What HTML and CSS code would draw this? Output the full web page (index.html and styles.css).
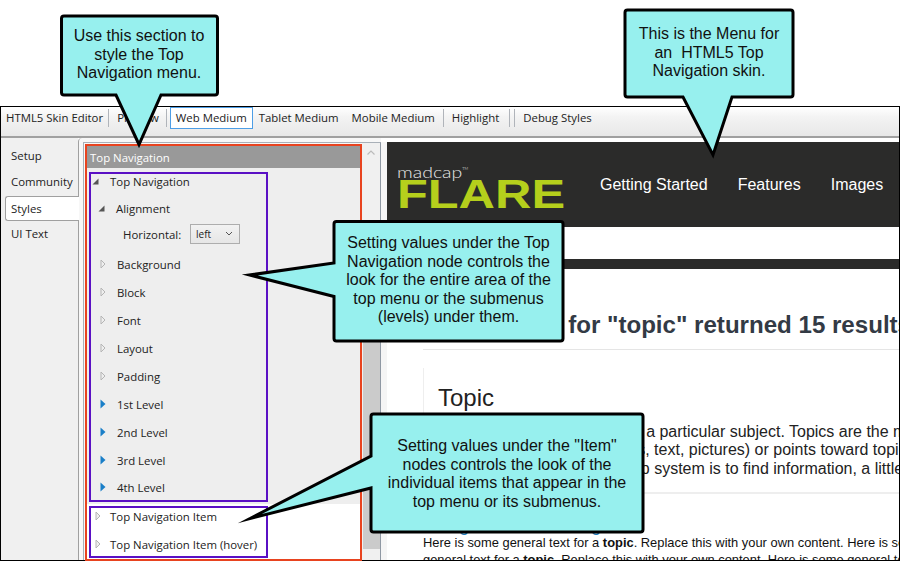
FILE: index.html
```html
<!DOCTYPE html>
<html lang="en">
<head>
<meta charset="UTF-8">
<meta name="viewport" content="width=device-width, initial-scale=1.0">
<title>HTML5 Skin Editor - Top Navigation</title>
<link rel="stylesheet" href="styles.css">
</head>
<body>

<svg class="icon-defs" width="0" height="0">
  <symbol id="tri-open" viewBox="0 0 7 7"><path d="M6.5 0.5V6.5H0.5Z" fill="#555"/></symbol>
  <symbol id="tri-closed" viewBox="0 0 6 10"><path d="M1 1L5 5L1 9Z" fill="#eee" stroke="#b5b5b5"/></symbol>
  <symbol id="tri-blue" viewBox="0 0 6 10"><path d="M0.5 0.5L5.5 5L0.5 9.5Z" fill="#1a7fc8"/></symbol>
</svg>

<div class="app">
  <div class="window">
    <div class="toolbar">
      <span class="tool first">HTML5 Skin Editor</span>
      <span class="tool-sep"></span>
      <span class="tool preview-tool">Preview</span>
      <span class="tool-sep"></span>
      <span class="tool active">Web Medium</span>
      <span class="tool tablet">Tablet Medium</span>
      <span class="tool mobile">Mobile Medium</span>
      <span class="tool-sep"></span>
      <span class="tool pad highlight">Highlight</span>
      <span class="tool-sep"></span>
      <span class="tool-sep second"></span>
      <span class="tool pad">Debug Styles</span>
    </div>

    <div class="main">
      <div class="tabs">
        <div class="tab">Setup</div>
        <div class="tab">Community</div>
        <div class="tab selected">Styles</div>
        <div class="tab">UI Text</div>
      </div>

      <div class="editor">
        <div class="frame">
          <div class="section">
            <div class="section-title">Top Navigation</div>
            <div class="tree-main">
              <div class="tree-group">
                <div class="row depth-0"><svg class="tri-dark"><use href="#tri-open"/></svg>Top Navigation</div>
                <div class="row depth-1 tight"><svg class="tri-dark"><use href="#tri-open"/></svg>Alignment</div>
                <div class="field">
                  <span class="field-label">Horizontal:</span>
                  <span class="select">left
                    <svg class="select-arrow" width="8" height="5" viewBox="0 0 8 5"><path d="M1 1L4 4L7 1" fill="none" stroke="#555"/></svg>
                  </span>
                </div>
                <div class="row depth-2"><svg class="tri"><use href="#tri-closed"/></svg>Background</div>
                <div class="row depth-2"><svg class="tri"><use href="#tri-closed"/></svg>Block</div>
                <div class="row depth-2"><svg class="tri"><use href="#tri-closed"/></svg>Font</div>
                <div class="row depth-2"><svg class="tri"><use href="#tri-closed"/></svg>Layout</div>
                <div class="row depth-2"><svg class="tri"><use href="#tri-closed"/></svg>Padding</div>
                <div class="row depth-2"><svg class="tri"><use href="#tri-blue"/></svg>1st Level</div>
                <div class="row depth-2"><svg class="tri"><use href="#tri-blue"/></svg>2nd Level</div>
                <div class="row depth-2"><svg class="tri"><use href="#tri-blue"/></svg>3rd Level</div>
                <div class="row depth-2 tight"><svg class="tri"><use href="#tri-blue"/></svg>4th Level</div>
              </div>
            </div>
            <div class="tree-group items">
              <div class="row depth-item"><svg class="tri"><use href="#tri-closed"/></svg>Top Navigation Item</div>
              <div class="row depth-item"><svg class="tri"><use href="#tri-closed"/></svg>Top Navigation Item (hover)</div>
            </div>
          </div>
          <div class="scrollbar">
            <svg class="scroll-up" width="8" height="5" viewBox="0 0 8 5"><path d="M0.5 4.5L4 1L7.5 4.5" fill="none" stroke="#bbb" stroke-width="1.2"/></svg>
            <div class="scroll-thumb"></div>
          </div>
        </div>
      </div>

      <div class="preview">
        <div class="page">
          <div class="banner">
            <div class="logo">
              <span class="logo-top">madcap<sup>TM</sup></span>
              <span class="logo-flare">FLARE</span>
            </div>
            <nav class="nav">
              <span>Getting Started</span>
              <span>Features</span>
              <span>Images</span>
              <span>Tables</span>
            </nav>
          </div>
          <div class="banner-rule"></div>
          <div class="content">
            <h1 class="search-title">Your search for "topic" returned 15 results</h1>
            <div class="result">
              <h2 class="result-title">Topic</h2>
              <p class="result-text">A topic contains words about a particular subject. Topics are the main<br>
              units of content (images, files, text, pictures) or points toward topics and<br>
              The goal of any user of a help system is to find information, a little at a time</p>
            </div>
            <h3 class="sub-title">Using the Bold Setting</h3>
            <p class="body-text">Here is some general text for a <b>topic</b>. Replace this with your own content. Here is some general text<br>
            general text for a <b>topic</b>. Replace this with your own content. Here is some general text for a topic</p>
          </div>
        </div>
      </div>
    </div>
  </div>

  <svg class="callout-shapes" width="900" height="561" viewBox="0 0 900 561">
    <path d="M64 16H215Q217.5 16 217.5 18.5V92.5Q217.5 95 215 95H161L139 144.5L116 95H64Q61.5 95 61.5 92.5V18.5Q61.5 16 64 16Z"/>
    <path d="M627.5 10H790.5Q793 10 793 12.5V94.5Q793 97 790.5 97H732L713 155L683 97H627.5Q625 97 625 94.5V12.5Q625 10 627.5 10Z"/>
    <path d="M336.5 221.5H560.5Q563 221.5 563 224V338.5Q563 341 560.5 341H336.5Q334 341 334 338.5V296.5L249.5 275L334 263V224Q334 221.5 336.5 221.5Z"/>
    <path d="M373.5 414H640.5Q643 414 643 416.5V529.5Q643 532 640.5 532H373.5Q371 532 371 529.5V488L250 518.5L371 456V416.5Q371 414 373.5 414Z"/>
  </svg>
  <div class="callout-text c-section">Use this section to<br>style the Top<br>Navigation menu.</div>
  <div class="callout-text c-menu">This is the Menu for<br>an&nbsp; HTML5 Top<br>Navigation skin.</div>
  <div class="callout-text c-node">Setting values under the Top<br>Navigation node controls the<br>look for the entire area of the<br>top menu or the submenus<br>(levels) under them.</div>
  <div class="callout-text c-item">Setting values under the "Item"<br>nodes controls the look of the<br>individual items that appear in the<br>top menu or its submenus.</div>
</div>

</body>
</html>
```

FILE: styles.css
```css
* {
  box-sizing: border-box;
}
body {
  margin: 0;
  background-color: #fff;
  font-family: "Open Sans", "Noto Sans", sans-serif;
  font-size: 11.4px;
  color: #222;
}
.icon-defs {
  position: absolute;
}
.app {
  position: relative;
  width: 900px;
  height: 561px;
  padding-top: 106px;
  overflow: hidden;
}
.window {
  display: flex;
  flex-direction: column;
  height: 455px;
  border: 1px solid #000;
}

/* toolbar */
.toolbar {
  display: flex;
  align-items: flex-start;
  flex: none;
  height: 31px;
  border-bottom: 2px solid #a0a0a0;
  background: linear-gradient(#fff, #f3f3f3 35%, #e8e8e8);
}
.tool {
  height: 22px;
  line-height: 22px;
  white-space: nowrap;
}
.tool.first {
  padding: 0 5px;
}
.tool.preview-tool {
  padding: 0 7px 0 8px;
}
.tool.pad {
  padding: 0 8px;
}
.tool.pad.highlight {
  padding-right: 10px;
}
.tool.active {
  margin: 0 6px 0 3px;
  padding: 0 5px;
  line-height: 20px;
  border: 1px solid #4d9ee6;
  background-color: #fff;
}
.tool.mobile {
  margin: 0 8px 0 13px;
}
.tool-sep {
  flex: none;
  width: 1px;
  height: 18px;
  margin-top: 2px;
  background-color: #b0b4ba;
}
.tool-sep.second {
  margin-left: 4px;
}

/* side tabs */
.main {
  display: flex;
  flex: 1;
  min-height: 0;
}
.tabs {
  flex: none;
  width: 77px;
  padding: 6px 0 0 4px;
  background-color: #f0f0f0;
}
.tab {
  position: relative;
  height: 26px;
  padding-left: 6px;
  line-height: 24px;
}
.tab.selected {
  z-index: 1;
  width: 74px;
  height: 25px;
  margin-bottom: 1px;
  background-color: #fff;
  border: 1px solid #a0a0a0;
  border-right: none;
  border-radius: 3px 0 0 3px;
  padding-left: 5px;
}

/* editor pane */
.editor {
  flex: none;
  width: 303px;
  padding: 4px 0 0 4px;
  background-color: #f7f7f7;
  border-left: 1px solid #a0a0a0;
  border-top-left-radius: 4px;
}
.frame {
  display: flex;
  height: 100%;
  border-left: 1px solid #a9b0b8;
  border-right: 1px solid #8f98a3;
  border-top: 1px solid #a9b0b8;
}
.section {
  flex: none;
  width: 277px;
  height: 417px;
  margin: 1px 0 0 1px;
  border: 2px solid #e8431f;
  background-color: #fff;
}
.section-title {
  height: 22px;
  padding-left: 3px;
  line-height: 23px;
  color: #fff;
  background-color: #999;
}
.tree-main {
  padding: 4px 0 2px 2px;
  background-color: #eee;
}
.tree-group {
  width: 179px;
  padding: 0 0 5px;
  border: 2px solid #5a10c4;
}
.tree-group.items {
  margin: 2px 0 0 2px;
  padding: 0 0 4px;
}
.row {
  display: flex;
  align-items: center;
  height: 16px;
  margin-top: 12px;
  white-space: nowrap;
}
.row:first-child {
  margin-top: -1px;
}
.items .row:first-child {
  margin-top: 0;
}
.row.tight {
  margin-top: 11px;
}
.depth-0 {
  padding-left: 1px;
}
.depth-1 {
  padding-left: 7px;
}
.depth-2 {
  padding-left: 9px;
}
.depth-item {
  padding-left: 4px;
}
.tri-dark {
  flex: none;
  width: 7px;
  height: 7px;
  margin-right: 11px;
}
.tri {
  flex: none;
  width: 6px;
  height: 10px;
  margin-right: 11px;
}
.depth-item .tri {
  margin-right: 9px;
}
.field {
  display: flex;
  align-items: center;
  height: 20px;
  margin-top: 8px;
  padding-left: 32px;
}
.field-label {
  width: 67px;
}
.select {
  position: relative;
  width: 50px;
  height: 20px;
  padding-left: 5px;
  line-height: 18px;
  font-size: 10px;
  border: 1px solid #adadad;
  background: linear-gradient(#f2f2f2, #e6e6e6);
}
.select-arrow {
  position: absolute;
  top: 6px;
  right: 6px;
}

/* scrollbar */
.scrollbar {
  flex: 1;
  padding-top: 7px;
  background-color: #f0f0f0;
}
.scroll-up {
  display: block;
  margin-left: 5px;
}
.scroll-thumb {
  height: 249px;
  margin: 145px 0 0 1px;
  background-color: #cbcbcb;
}

/* preview of the skin */
.preview {
  flex: 1;
  min-width: 0;
  padding-top: 4px;
  background-color: #fff;
  overflow: hidden;
}
.page {
  height: 100%;
  border-left: 6px solid #f5f5f5;
  overflow: hidden;
  font-family: "Liberation Sans", Arial, sans-serif;
}
.banner {
  display: flex;
  align-items: center;
  height: 85px;
  padding: 0 0 0 10px;
  background-color: #2b2b2a;
  overflow: hidden;
}
.logo {
  display: flex;
  flex: none;
  flex-direction: column;
  width: 167px;
  margin: 4px 36px 0 0;
}
.logo-top {
  height: 14px;
  line-height: 13px;
  font-family: Lato, sans-serif;
  font-size: 15px;
  font-weight: 300;
  color: #e8e8e8;
  transform: scaleX(1.3);
  transform-origin: left;
}
.logo-top sup {
  font-size: 3px;
  vertical-align: 8px;
}
.logo-flare {
  height: 34px;
  line-height: 34px;
  font-family: "Liberation Sans", sans-serif;
  font-size: 41px;
  font-weight: 700;
  color: #b5cf1c;
  transform: scaleX(1.23);
  transform-origin: left;
}
.nav {
  display: flex;
  flex: none;
  gap: 30px;
  font-size: 16px;
  color: #fff;
}
.banner-rule {
  height: 10px;
  margin-top: 32px;
  background-color: #2b2b2a;
}
.content {
  padding: 41px 0 0 36px;
  white-space: nowrap;
}
.search-title {
  height: 40px;
  margin: 0;
  padding: 0 0 0 1px;
  font-size: 24.1px;
  line-height: 30px;
  color: #333a45;
  border-bottom: 1px solid #e5e5e5;
}
.result {
  height: 126px;
  margin-top: 18px;
  padding: 15px 0 0 14px;
  border-left: 1px solid #eee;
  border-bottom: 2px solid #eee;
}
.result-title {
  margin: 0 0 10px;
  font-size: 24px;
  font-weight: 400;
  line-height: 30px;
  color: #222;
}
.result-text {
  margin: 0;
  font-size: 16px;
  line-height: 18.4px;
  color: #222;
}
.sub-title {
  margin: 22px 0 0;
  font-size: 18px;
  font-weight: 400;
  line-height: 18px;
  color: #1e7fc0;
}
.body-text {
  margin: 1px 0 0;
  font-size: 12.9px;
  line-height: 16.5px;
  color: #111;
}

/* callouts */
.callout-shapes {
  position: absolute;
  top: 0;
  left: 0;
}
.callout-shapes path {
  fill: #97f0ee;
  stroke: #000;
  stroke-width: 3;
  stroke-miterlimit: 20;
}
.callout-text {
  position: absolute;
  font-family: "Liberation Sans", Arial, sans-serif;
  font-size: 16px;
  line-height: 18.5px;
  text-align: center;
  color: #111;
  white-space: nowrap;
}
.c-section {
  top: 27px;
  left: 61px;
  width: 156px;
}
.c-menu {
  top: 25px;
  left: 625px;
  width: 168px;
}
.c-node {
  top: 234px;
  left: 334px;
  width: 229px;
}
.c-item {
  top: 437px;
  left: 371px;
  width: 272px;
}
```
